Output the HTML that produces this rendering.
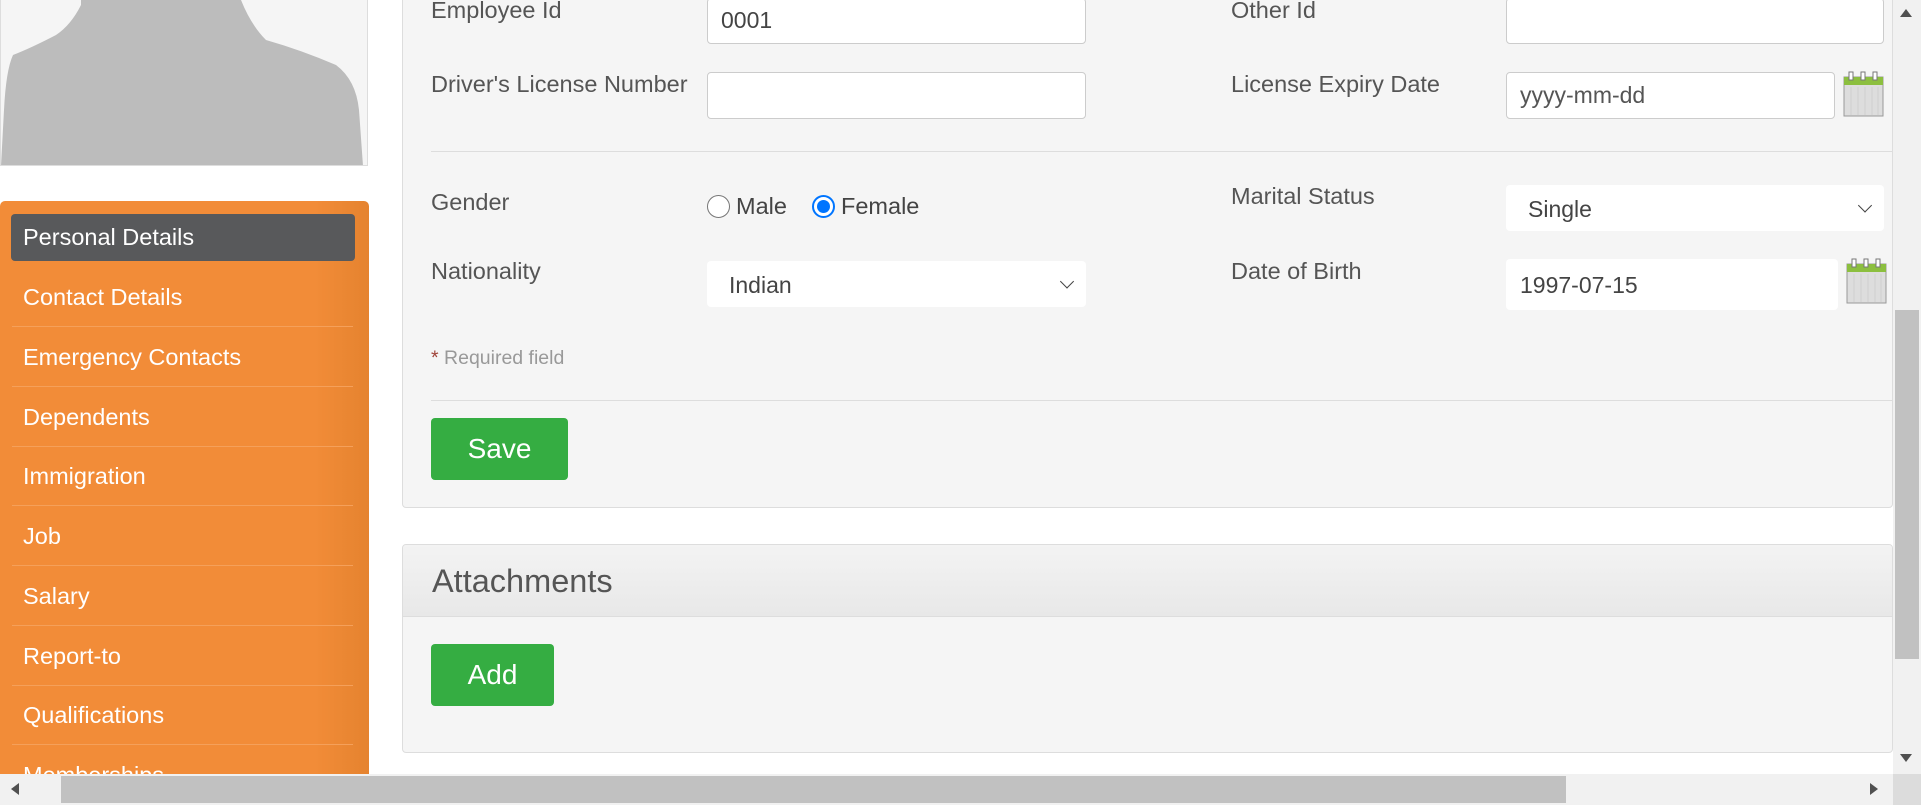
<!DOCTYPE html>
<html><head><meta charset="utf-8"><style>
*{box-sizing:border-box;margin:0;padding:0}
body{width:1921px;height:805px;overflow:hidden;background:#fff;font-family:"Liberation Sans",Arial,sans-serif;position:relative;color:#555}
.a{position:absolute}
.photo{left:0;top:0;width:368px;height:166px;background:#f5f5f5;border:1px solid #ddd;border-top:none;overflow:hidden}
.side{left:0;top:201px;width:369px;height:573px;background:linear-gradient(to right,#f28c38 0%,#f28c38 85%,#e5832f 100%);border-radius:5px 5px 0 0;overflow:hidden}
.mi{position:absolute;left:12px;width:341px;height:60px;color:#fff;font-size:23.5px;padding-left:11px;line-height:60px;border-bottom:1px solid #f5a05a}
.act{background:#58595b;border-radius:4px;height:47px;line-height:47px;left:11px;width:344px;border:none;padding-left:12px}
.panel{left:402px;top:-10px;width:1491px;height:518px;background:#f5f5f5;border:1px solid #ddd;border-radius:4px}
.lbl{font-size:23.5px;color:#555}
.inp{background:#fff;border:1px solid #ccc;border-radius:4px;font-size:23px;color:#444;padding-left:13px}
.sel{background:#fff;border-radius:4px;font-size:23px;color:#444;padding-left:22px}
.chev{position:absolute;right:14px;top:50%;width:10px;height:10px;border-right:1.5px solid #444;border-bottom:1.5px solid #444;transform:translateY(-75%) rotate(45deg)}
.btn{background:#35ad42;color:#fff;font-size:28px;border-radius:4px;text-align:center}
.hr{height:1px;background:#ddd}
</style></head><body>

<div class="a photo">
<svg width="368" height="166" viewBox="0 0 368 166"><path d="M80 0 L80 5 Q70 25 55 35 Q30 48 12 55 Q5 70 3 110 L0 166 L362 166 L358 110 Q355 80 335 65 Q300 50 265 40 Q250 25 240 0 Z" fill="#bcbcbc"/></svg>
</div>

<div class="a side">
<div class="mi act" style="top:13px">Personal Details</div>
<div class="mi" style="top:66px">Contact Details</div>
<div class="mi" style="top:126px">Emergency Contacts</div>
<div class="mi" style="top:186px">Dependents</div>
<div class="mi" style="top:245px">Immigration</div>
<div class="mi" style="top:305px">Job</div>
<div class="mi" style="top:365px">Salary</div>
<div class="mi" style="top:425px">Report-to</div>
<div class="mi" style="top:484px">Qualifications</div>
<div class="mi" style="top:544px">Memberships</div>
</div>

<div class="a panel"></div>
<div class="a lbl" style="left:431px;top:-3px">Employee Id</div>
<div class="a inp" style="left:707px;top:-2px;width:379px;height:46px;line-height:42px">0001</div>
<div class="a lbl" style="left:1231px;top:-3px">Other Id</div>
<div class="a inp" style="left:1506px;top:-2px;width:378px;height:46px"></div>

<div class="a lbl" style="left:431px;top:71px">Driver's License Number</div>
<div class="a inp" style="left:707px;top:72px;width:379px;height:47px"></div>
<div class="a lbl" style="left:1231px;top:71px">License Expiry Date</div>
<div class="a inp" style="left:1506px;top:72px;width:329px;height:47px;line-height:45px;color:#555">yyyy-mm-dd</div>
<svg class="a" style="left:1843px;top:71px" width="41" height="46" viewBox="0 0 41 46"><rect x="1" y="6" width="39" height="39" fill="#ddd" stroke="#999"/><rect x="1" y="6" width="39" height="8" fill="#8cbf3f"/><g stroke="#cfcfcf"><line x1="8" y1="16" x2="8" y2="44"/><line x1="15" y1="16" x2="15" y2="44"/><line x1="22" y1="16" x2="22" y2="44"/><line x1="29" y1="16" x2="29" y2="44"/><line x1="35" y1="16" x2="35" y2="44"/></g><g fill="#fff" stroke="#777"><rect x="6" y="1" width="4" height="8"/><rect x="18" y="1" width="4" height="8"/><rect x="30" y="1" width="4" height="8"/></g></svg>

<div class="a hr" style="left:431px;top:151px;width:1462px"></div>

<div class="a lbl" style="left:431px;top:189px">Gender</div>
<div class="a" style="left:707px;top:195px;width:23px;height:23px;border:1px solid #767676;border-radius:50%;background:#fff"></div>
<div class="a lbl" style="left:736px;top:193px;color:#444">Male</div>
<div class="a" style="left:812px;top:195px;width:23px;height:23px;border:2px solid #0075ff;border-radius:50%;background:#fff"><div style="margin:3px;width:13px;height:13px;border-radius:50%;background:#0075ff"></div></div>
<div class="a lbl" style="left:841px;top:193px;color:#444">Female</div>
<div class="a lbl" style="left:1231px;top:183px">Marital Status</div>
<div class="a sel" style="left:1506px;top:185px;width:378px;height:46px;line-height:48px">Single<span class="chev"></span></div>

<div class="a lbl" style="left:431px;top:258px">Nationality</div>
<div class="a sel" style="left:707px;top:261px;width:379px;height:46px;line-height:48px">Indian<span class="chev"></span></div>
<div class="a lbl" style="left:1231px;top:258px">Date of Birth</div>
<div class="a sel" style="left:1506px;top:259px;width:332px;height:51px;line-height:53px;padding-left:14px">1997-07-15</div>
<svg class="a" style="left:1846px;top:258px" width="41" height="46" viewBox="0 0 41 46"><rect x="1" y="6" width="39" height="39" fill="#ddd" stroke="#999"/><rect x="1" y="6" width="39" height="8" fill="#8cbf3f"/><g stroke="#cfcfcf"><line x1="8" y1="16" x2="8" y2="44"/><line x1="15" y1="16" x2="15" y2="44"/><line x1="22" y1="16" x2="22" y2="44"/><line x1="29" y1="16" x2="29" y2="44"/><line x1="35" y1="16" x2="35" y2="44"/></g><g fill="#fff" stroke="#777"><rect x="6" y="1" width="4" height="8"/><rect x="18" y="1" width="4" height="8"/><rect x="30" y="1" width="4" height="8"/></g></svg>

<div class="a" style="left:431px;top:347px;font-size:19.5px;color:#999"><span style="color:#a0443a">*</span> Required field</div>
<div class="a hr" style="left:431px;top:400px;width:1462px"></div>
<div class="a btn" style="left:431px;top:418px;width:137px;height:62px;line-height:62px">Save</div>

<div class="a" style="left:402px;top:544px;width:1491px;height:209px;background:#f5f5f5;border:1px solid #ddd;border-radius:4px;overflow:hidden">
<div style="height:72px;background:linear-gradient(#f3f3f3,#e8e8e8);border-bottom:1px solid #ddd;font-size:32.5px;color:#555;padding-left:29px;line-height:72px">Attachments</div>
</div>
<div class="a btn" style="left:431px;top:644px;width:123px;height:62px;line-height:62px">Add</div>

<div class="a" style="left:1893px;top:0;width:28px;height:774px;background:#f1f1f1"></div>
<div class="a" style="left:1895px;top:310px;width:24px;height:349px;background:#c1c1c1"></div>
<div class="a" style="left:1900px;top:9px;width:0;height:0;border-left:6px solid transparent;border-right:6px solid transparent;border-bottom:8px solid #505050"></div>
<div class="a" style="left:1900px;top:754px;width:0;height:0;border-left:6px solid transparent;border-right:6px solid transparent;border-top:8px solid #505050"></div>
<div class="a" style="left:0;top:774px;width:1893px;height:31px;background:#f1f1f1"></div>
<div class="a" style="left:61px;top:776px;width:1505px;height:27px;background:#c1c1c1"></div>
<div class="a" style="left:11px;top:783px;width:0;height:0;border-top:6px solid transparent;border-bottom:6px solid transparent;border-right:8px solid #505050"></div>
<div class="a" style="left:1870px;top:783px;width:0;height:0;border-top:6px solid transparent;border-bottom:6px solid transparent;border-left:8px solid #505050"></div>
<div class="a" style="left:1893px;top:774px;width:28px;height:31px;background:#dcdcdc"></div>
</body></html>
